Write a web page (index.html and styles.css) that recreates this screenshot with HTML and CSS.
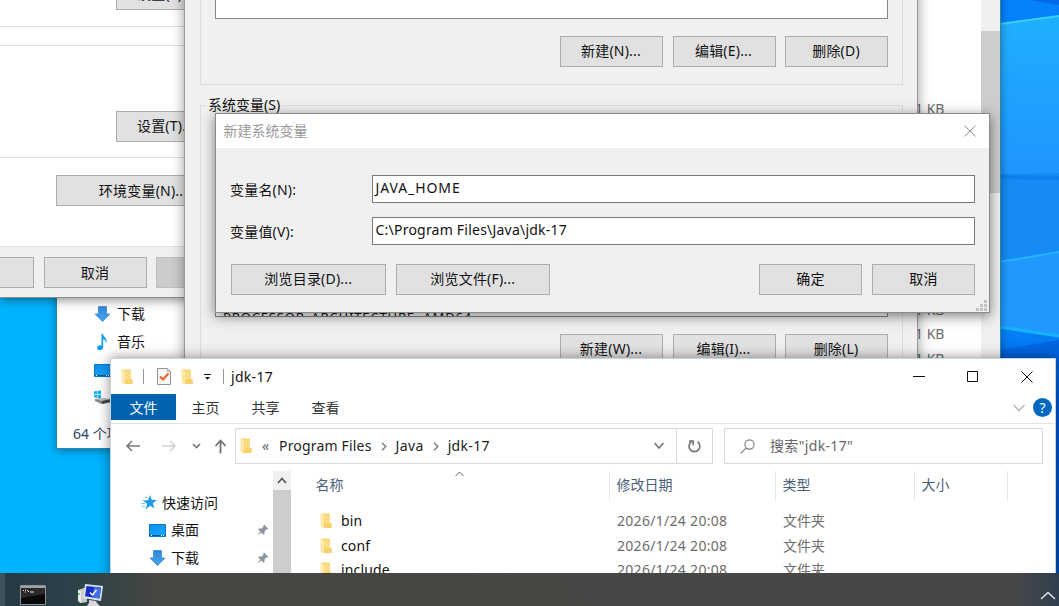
FILE: index.html
```html
<!DOCTYPE html>
<html lang="zh-CN">
<head>
<meta charset="utf-8">
<title>jdk-17</title>
<link rel="stylesheet" href="styles.css">
</head>
<body>
<svg width="0" height="0" class="defs">
  <defs>
    <linearGradient id="arr" x1="0" y1="0" x2="0" y2="1"><stop offset="0" stop-color="#2f86d8"/><stop offset="1" stop-color="#48a6f2"/></linearGradient>
    <linearGradient id="scr" x1="0" y1="0" x2="1" y2="1"><stop offset="0" stop-color="#0f8fee"/><stop offset="1" stop-color="#16aaff"/></linearGradient>
    <symbol id="folder" viewBox="0 0 12 16"><path d="M1 .5h9v9.500h1.500V15H4L1 13z" fill="#f8d675"/><path d="M.5.5L4 2.500V16L.5 13.500z" fill="#ffe9a9"/><path d="M4 2h6v9H4z" fill="#fbdc85"/><path d="M4 10.500h7.500V15H4z" fill="#f6d06a"/></symbol>
    <symbol id="down" viewBox="0 0 16 16"><path d="M4 .5h8V8h3.500L8 15.500.5 8H4z" fill="url(#arr)" stroke="#2c7fcb" stroke-width=".7"/></symbol>
    <symbol id="desk" viewBox="0 0 17 13"><path d="M.5.5h16v12H.5z" fill="url(#scr)" stroke="#0878cb"/><path d="M1 11.500h15" stroke="#075b9d"/><path d="M2 11.500h1M12 11.500h1M14 11.500h1" stroke="#fff"/></symbol>
    <symbol id="pin" viewBox="0 0 12 12"><path d="M7 .5L11.500 5l-1 .6-1-.3-2 2.100.1 2.300-1 1L4.300 8.500.7 11.300.5 11.100 3.400 7.600 1.200 5.400l1-1 2.400.1 2-2-.3-1z" fill="#8b959f"/></symbol>
  </defs>
</svg>
<div class="desktop">
  <svg class="wallpaper" width="1059" height="606">
    <defs>
      <linearGradient id="wl" x1="0" y1="0" x2="1" y2="0"><stop offset="0" stop-color="#00b4ff"/><stop offset="1" stop-color="#00abf8"/></linearGradient>
      <linearGradient id="wr" x1="0" y1="0" x2="0" y2="1"><stop offset="0" stop-color="#20b2ff"/><stop offset=".3" stop-color="#1f94ff"/><stop offset="1" stop-color="#1ba0ff"/></linearGradient>
      <linearGradient id="wd" x1="0" y1="0" x2="0" y2="1"><stop offset="0" stop-color="#0583f7"/><stop offset=".25" stop-color="#005be0"/><stop offset="1" stop-color="#0050b4"/></linearGradient>
    </defs>
    <rect width="999" height="606" fill="url(#wl)"/>
    <rect x="999" width="60" height="606" fill="url(#wr)"/>
    <path d="M999 0h60v16l-60 8z" fill="#0581fa"/>
    <path d="M1030 0h29v5z" fill="#006ae8"/>
    <path d="M999 24l60-8" stroke="#39d0ff" stroke-width="2"/>
    <path d="M999 174l60-1v84l-60 5z" fill="#188af5"/>
    <path d="M999 177l60 1" stroke="#087ae8" stroke-width="4" opacity=".6"/>
    <path d="M999 262l60-10v84l-60-9z" fill="#2098fd"/>
    <path d="M999 262l60-10" stroke="#25b3ff" stroke-width="2"/>
    <path d="M999 327l60 9v270h-60z" fill="url(#wd)"/>
    <path d="M999 327l60 9" stroke="#16b4ff" stroke-width="3"/>
    <path d="M1000 350l59-10v30h-59z" fill="#0064df"/>
  </svg>

  <section class="win back">
    <div class="tree">
      <div class="titem"><svg width="16" height="16"><use href="#down"/></svg>下载</div>
      <div class="titem"><svg width="16" height="18" viewBox="0 0 16 18"><path d="M7 1h1.500c.5 3 5 4 3.200 9.500C11.500 7.500 10 6.500 8.700 6.300V14c0 4-6.200 4.200-6.200.8 0-2 2.500-3.200 4.500-2.300z" fill="#139bf3"/></svg>音乐</div>
      <div class="titem"><svg width="17" height="13"><use href="#desk"/></svg></div>
      <div class="titem"><svg width="17" height="16" viewBox="0 0 17 16"><path d="M0 1.500l3-.4v3H0zM3.600 1L7 .5v3.600H3.600zM0 4.700h3v3l-3-.4zM3.600 4.700H7v3.600l-3.400-.4z" fill="#11b0ef"/><path d="M1 9l6-1.500L17 9v3l-9 2-7-3z" fill="#b9bcbd"/><path d="M1 9l7 2v3l-7-3z" fill="#888"/><path d="M8 11l9-2v3l-9 2z" fill="#444"/></svg></div>
    </div>
    <div class="status">64 个项目</div>
    <div class="sizes"><span>1 KB</span><span class="gap">1 KB</span><span>1 KB</span><span>1 KB</span></div>
    <div class="vbar"><i></i></div>
  </section>

  <section class="win sys">
    <div class="btn b1">设置(S)...</div>
    <hr class="h1"><hr class="h2">
    <div class="btn b2">设置(T)...</div>
    <hr class="h3">
    <div class="btn b3">环境变量(N)...</div>
    <div class="foot"><div class="btn f1"></div><div class="btn f2">取消</div><div class="btn f3">应用(A)</div></div>
  </section>

  <section class="win env">
    <div class="group g1">
      <div class="list l1"></div>
      <div class="row"><div class="btn">新建(N)...</div><div class="btn">编辑(E)...</div><div class="btn">删除(D)</div></div>
    </div>
    <div class="group g2">
      <div class="legend">系统变量(S)</div>
      <div class="list l2"><span>PROCESSOR_ARCHITECTURE&nbsp; AMD64</span></div>
      <div class="row"><div class="btn">新建(W)...</div><div class="btn">编辑(I)...</div><div class="btn">删除(L)</div></div>
    </div>
  </section>

  <section class="win dlg">
    <header><span>新建系统变量</span><svg width="12" height="12" viewBox="0 0 12 12"><path d="M.5.5l11 11M11.500.5l-11 11" stroke="#8e8e8e" fill="none"/></svg></header>
    <div class="field"><label>变量名(N):</label><div class="input"><span class="t1">JAVA_HOME</span></div></div>
    <div class="field"><label>变量值(V):</label><div class="input"><span class="t2">C:\Program Files\Java\jdk-17</span></div></div>
    <div class="acts"><div class="btn wide">浏览目录(D)...</div><div class="btn wide">浏览文件(F)...</div><div class="btn ok">确定</div><div class="btn">取消</div></div>
    <svg class="grip" width="11" height="11" viewBox="0 0 11 11"><path d="M8 0h3v3H8zM4 4h3v3H4zM8 4h3v3H8zM0 8h3v3H0zM4 8h3v3H4zM8 8h3v3H8z" fill="#c3c3c3"/></svg>
  </section>

  <section class="win exp">
    <div class="title">
      <svg width="12" height="16"><use href="#folder"/></svg><i class="bar b-a"></i>
      <svg class="chk" width="14" height="17" viewBox="0 0 14 17"><path d="M.5.5h10l3 3v13H.5z" fill="#f7f7f7" stroke="#929292"/><path d="M10.500.5v3h3" fill="none" stroke="#aaa"/><path d="M3 8.500l3 3 5.500-6" fill="none" stroke="#e8622c" stroke-width="2"/></svg>
      <svg class="fb" width="12" height="16"><use href="#folder"/></svg>
      <svg class="dd" width="7" height="6" viewBox="0 0 7 6"><path d="M0 .5h7" stroke="#111"/><path d="M1 3h5L3.500 5.800z" fill="#111"/></svg>
      <i class="bar b-b"></i><span class="name">jdk-17</span>
      <div class="ctl"><svg width="12" height="12"><path d="M0 5.500h12" stroke="#111"/></svg><svg width="12" height="12"><path d="M.5.5h10v10H.5z" stroke="#111" fill="none"/></svg><svg width="12" height="12"><path d="M.5.500l11 11M11.500.5l-11 11" stroke="#111"/></svg></div>
    </div>
    <div class="tabs"><b>文件</b><span>主页</span><span>共享</span><span>查看</span>
      <svg class="chev" width="12" height="8"><path d="M.5 1l5.500 5.500L11.500 1" stroke="#b1b1b1" stroke-width="1.300" fill="none"/></svg><div class="help">?</div></div>
    <div class="nav">
      <svg class="arrows" width="106" height="20" viewBox="0 0 106 20" fill="none"><path d="M20 10H7M12 5l-5 5 5 5" stroke="#777" stroke-width="1.500"/><path d="M42 10h13M50 5l5 5-5 5" stroke="#d0d0d0" stroke-width="1.500"/><path d="M73 8l3.500 3.500L80 8" stroke="#777" stroke-width="1.700"/><path d="M100.500 17.500V5M95.500 10l5-5.500 5 5.500" stroke="#737373" stroke-width="1.800"/></svg>
      <div class="addr"><svg width="12" height="16"><use href="#folder"/></svg><i class="lq">«</i><span class="pf">Program Files</span><svg width="6" height="9" class="sep s1"><path d="M1 .7l3.800 3.800L1 8.300" stroke="#777" stroke-width="1.300" fill="none"/></svg><span class="jv">Java</span><svg width="6" height="9" class="sep s2"><path d="M1 .7l3.800 3.800L1 8.300" stroke="#777" stroke-width="1.300" fill="none"/></svg><span class="jd">jdk-17</span>
        <svg class="ad" width="12" height="8"><path d="M1.500 1L6 6l4.500-5" stroke="#777" stroke-width="1.700" fill="none"/></svg>
        <div class="re"><svg width="15" height="15" viewBox="0 0 15 15" fill="none"><path d="M10.500 2.800a5.400 5.400 0 1 1-5.800-.2M2 2h4.200v4.200" stroke="#777" stroke-width="1.700"/></svg></div></div>
      <div class="search"><svg width="15" height="15" viewBox="0 0 15 15" fill="none"><circle cx="9.500" cy="5.500" r="4.600" stroke="#7b7b7b" stroke-width="1.100"/><path d="M6.200 8.800L.7 14.300" stroke="#7b7b7b" stroke-width="1.100"/></svg>搜索"jdk-17"</div>
    </div>
    <div class="body">
      <div class="side">
        <div class="q"><svg width="16" height="15" viewBox="0 0 16 15"><path d="M9 0l1.800 4.700 5.100.2-4 3.300 1.600 5.300-4.400-2.700-4.500 3.600 1.400-5.500L2.200 5.500l5-.4z" fill="#219be9"/><path d="M1 5.500h4M0 8.500h4M1 11.500h3M4 2.500h3" stroke="#7ccaf6"/></svg>快速访问</div>
        <div class="q in"><svg width="17" height="13"><use href="#desk"/></svg>桌面<svg class="pin" width="12" height="12"><use href="#pin"/></svg></div>
        <div class="q in"><svg width="16" height="16"><use href="#down"/></svg>下载<svg class="pin" width="12" height="12"><use href="#pin"/></svg></div>
      </div>
      <div class="sb"><svg width="10" height="7"><path d="M1 6l4-4.500L9 6" stroke="#555" stroke-width="1.700" fill="none"/></svg><i></i></div>
      <div class="files">
        <div class="cols"><span>名称<svg class="sort" width="9" height="6"><path d="M.5 5l4-4 4 4" stroke="#666" fill="none"/></svg></span><span>修改日期</span><span>类型</span><span>大小</span></div>
        <div class="f"><svg width="12" height="16"><use href="#folder"/></svg><span>bin</span><span>2026/1/24 20:08</span><span>文件夹</span></div>
        <div class="f"><svg width="12" height="16"><use href="#folder"/></svg><span>conf</span><span>2026/1/24 20:08</span><span>文件夹</span></div>
        <div class="f"><svg width="12" height="16"><use href="#folder"/></svg><span>include</span><span>2026/1/24 20:08</span><span>文件夹</span></div>
      </div>
    </div>
  </section>

  <footer class="task">
    <svg class="cmd" width="26" height="20" viewBox="0 0 26 20"><path d="M.5.5h25v19H.5z" fill="#080808" stroke="#8c9294"/><path d="M1 2h24" stroke="#9fa3a5" stroke-width="2"/><path d="M3 5.500h1M5 5h1M5 7h1M7 5l2 2M10 7h4" stroke="#ddd"/><path d="M1 3h24v6L1 13z" fill="#fff" opacity=".14"/></svg>
    <svg class="pc" width="27" height="22" viewBox="0 0 27 22"><path d="M1 6l6-2 3 1v13l-6 1-3-2z" fill="#c9cdca"/><path d="M1 6l3 1v12l-3-2z" fill="#ecefed"/><path d="M2 9v2" stroke="#43c434" stroke-width="1.500"/><path d="M8 0l18 2-2 15L6 14z" fill="#dbe2e8"/><path d="M9.500 2L24 3.500 22.500 14.500 8 12.300z" fill="#1730c4"/><path d="M17 3l7 .7-1.500 10.800-7-1z" fill="#426de4"/><path d="M13 8.500l2.500 2.500 4-5" fill="none" stroke="#fff" stroke-width="1.500"/><path d="M12 16l7 1 1 2 3 3H10l2-3z" fill="#d4d8db"/></svg>
    <svg class="tray" width="16" height="9"><path d="M1 8l7-6.500L15 8" stroke="#e8e8e8" stroke-width="1.400" fill="none"/></svg>
  </footer>
</div>
</body>
</html>
```
FILE: styles.css
```css
* { box-sizing: border-box; }
body { margin: 0; font: 14px/20px "Noto Sans", "Noto Sans CJK SC", sans-serif; color: #111; }
svg { display: block; flex: none; }
i { font-style: normal; }
.defs { position: absolute; }
.desktop { position: relative; width: 1059px; height: 606px; overflow: hidden; background: #00b0fc; white-space: nowrap; }
.wallpaper { position: absolute; left: 0; top: 0; }
.win { position: absolute; }
.btn { width: 103px; height: 31px; flex: none; display: flex; align-items: center; justify-content: center; background: #e1e1e1; border: 1px solid #adadad; letter-spacing: .2px; padding-bottom: 2px; }

/* background explorer */
.back { left: 56px; top: -20px; width: 945px; height: 469px; background: #fff; border: 1px solid #2c86a8; border-top: 0; box-shadow: 0 2px 8px rgba(0,0,0,.35); display: grid; grid-template: 1fr 30px / 1fr 64px 19px; }
.tree { padding: 320px 0 0 37px; }
.titem { display: flex; align-items: center; gap: 6px; height: 28px; }
.titem svg { width: 17px; }
.status { grid-row: 2; grid-column: 1; padding: 6px 0 0 16px; color: #2c4668; }
.sizes { grid-column: 2; grid-row: 1 / 3; display: flex; flex-direction: column; gap: 4.500px; padding-top: 119px; color: #6d6d6d; margin-left: -2px; }
.sizes .gap { margin-top: 176px; }
.vbar { grid-column: 3; grid-row: 1 / 3; background: #f0f0f0; padding-top: 51px; }
.vbar i { display: block; height: 162px; background: #cdcdcd; }

/* system properties */
.sys { left: 0; top: -21px; width: 220px; height: 319px; background: #fff; box-shadow: 0 2px 10px rgba(0,0,0,.45); border-bottom: 1px solid #8b8b8b; }
.sys hr { border: 0; height: 1px; background: #dcdcdc; margin: 0; }
.b1, .b2 { margin-left: 116px; }
.b1, .b2 { padding: 0 4px 1px 0; }
.sys .h1 { margin-top: 16px; }
.sys .h2 { margin-top: 18px; }
.b2 { margin-top: 65px; height: 31px; }
.sys .h3 { margin-top: 15px; }
.b3 { margin: 17px 0 0 56px; width: 172px; padding: 0 0 0 2px; }
.foot { margin-top: 40px; height: 51px; border-top: 1px solid #dfdfdf; background: #f0f0f0; display: flex; gap: 9.500px; padding-top: 10px; }
.f1 { width: 34px; border-left: 0; }
.f2 { padding-bottom: 0; }
.f3 { background: #ccc; border-color: #bfbfbf; color: #838383; }

/* environment variables */
.env { left: 184px; top: -41px; width: 734px; height: 440px; background: #f0f0f0; border: 1px solid #999; box-shadow: 0 2px 12px rgba(0,0,0,.4); padding: 0 14px 0 15px; }
.group { border: 1px solid #dcdcdc; padding: 0 14px; }
.g1 { height: 125px; border-top: 0; }
.list { background: #fff; border: 1px solid #828790; }
.l1 { height: 59px; }
.row { display: flex; justify-content: flex-end; gap: 9.500px; }
.row .btn { padding-right: 1px; }
.g1 .row { margin-top: 17px; }
.g2 { margin-top: 20px; height: 300px; }
.legend { margin: -11px 0 0 -9px; background: #f0f0f0; display: table; padding: 0 2px; line-height: 20px; }
.l2 { margin-top: 100px; height: 102px; display: flex; align-items: flex-end; overflow: hidden; padding-left: 7px; }
.l2 span { margin-bottom: -11px; line-height: 20px; font-size: 13px; letter-spacing: .85px; }
.g2 .row { margin-top: 17px; }

/* new variable dialog */
.dlg { left: 215px; top: 113px; width: 775px; height: 200px; background: #f0f0f0; border: 1px solid #8b8b8b; box-shadow: 0 3px 12px rgba(0,0,0,.5); }
.dlg header { height: 34px; background: #fff; display: flex; align-items: center; justify-content: space-between; padding: 0 13px 0 7.500px; color: #999; }
.dlg header span { margin-top: -1px; }
.field { display: flex; height: 28px; padding: 0 14px; margin-top: 14px; }
.dlg header + .field { margin-top: 27px; }
.field label { width: 142px; line-height: 29px; letter-spacing: .2px; }
.input { flex: 1; height: 28px; border: 1px solid #7a7a7a; background: #fff; padding-left: 2.500px; line-height: 24px; }
.t1 { letter-spacing: .9px; }
.t2 { letter-spacing: .22px; }
.acts { display: flex; gap: 10px; padding: 19px 14px 0 15px; }
.acts .btn { padding-bottom: 1px; }
.acts .wide { width: 154.500px; }
.ok { margin-left: auto; }
.grip { position: absolute; right: 2px; bottom: 1px; }

/* foreground explorer */
.exp { left: 110px; top: 358px; width: 946px; height: 230px; background: #fff; box-shadow: 0 0 12px rgba(0,0,0,.45); border: 1px solid #c6d4dc; border-bottom: 0; }
.title { height: 35px; display: flex; align-items: center; padding-left: 10px; }
.bar { width: 1px; height: 15px; background: #999; }
.b-a { margin-left: 10px; }
.chk { margin-left: 13px; }
.fb { margin-left: 10px; }
.dd { margin-left: 11px; }
.b-b { margin-left: 12px; }
.name { margin-left: 7px; letter-spacing: .3px; }
.ctl { margin-left: auto; display: flex; gap: 42px; padding-right: 22px; }
.tabs { height: 30px; display: flex; align-items: flex-start; line-height: 28px; border-bottom: 1px solid #e2e2e2; color: #333; }
.tabs b { width: 65px; height: 26px; background: #0063b1; color: #fff; font-weight: 400; text-align: center; line-height: 27px; }
.tabs span { width: 28px; margin-left: 32px; }
.tabs b + span { margin-left: 15.500px; }
.tabs .chev { margin: 10px 8px 0 auto; }
.help { width: 19px; height: 19px; border-radius: 50%; background: #0068c0; color: #fff; line-height: 19px; text-align: center; margin: 4px 3px 0 0; }
.nav { height: 47px; display: flex; padding: 4px 12px 0 14px; }
.arrows { margin-top: 8px; margin-left: -5px; }
.addr { margin-left: 9px; width: 478px; height: 36px; border: 1px solid #d9d9d9; display: flex; align-items: center; padding-left: 5px; color: #222; }
.addr > svg:first-child { margin-left: -1px; }
.lq { color: #666; margin-left: 10px; width: 9px; }
.pf { margin-left: 8px; letter-spacing: .18px; }
.s1 { margin: 0 9px 0 9px; }
.s2 { margin: 0 9px 0 9px; }
.jv, .jd { letter-spacing: .35px; }
.ad { margin-left: auto; margin-right: 11px; }
.re { width: 36px; height: 34px; border-left: 1px solid #d9d9d9; display: flex; align-items: center; justify-content: center; }
.search { margin-left: 11px; flex: 1; height: 36px; border: 1px solid #d9d9d9; display: flex; align-items: center; gap: 15px; padding-left: 15px; color: #666; letter-spacing: .35px; }
.body { display: flex; height: 103px; overflow: hidden; }
.side { width: 162px; padding-top: 18px; }
.q { height: 27.500px; display: flex; align-items: center; gap: 5px; padding: 0 4px 0 30px; }
.q.in { padding-left: 38px; }
.q.in svg:first-child { width: 17px; }
.pin { margin-left: auto; }
.sb { width: 18px; background: #f0f0f0; padding-top: 6px; }
.sb svg { margin: 0 auto; }
.sb i { display: block; margin-top: 6px; height: 90px; background: #cdcdcd; }
.files { flex: 1; }
.cols { display: flex; color: #4c607a; line-height: 28px; height: 37.500px; }
.cols span { height: 29px; border-right: 1px solid #e5e5e5; width: 139px; padding-left: 6.500px; }
.cols span:first-child { width: 319px; padding-left: 24.500px; display: flex; }
.cols span:nth-child(2) { width: 166px; }
.cols span:nth-child(4) { width: 93px; }
.sort { margin: 0 0 0 111.500px; }
.f { display: flex; height: 24.800px; align-items: center; padding-left: 29px; color: #6d6d6d; }
.f span:nth-child(2) { width: 276px; margin-left: 9px; color: #111; letter-spacing: .15px; }
.f span:nth-child(3) { width: 166px; letter-spacing: .3px; }

.task { position: absolute; left: 0; top: 573px; width: 1059px; height: 33px; display: flex; align-items: flex-start; padding: 12px 4px 0 15px; background: linear-gradient(90deg, #253a44 0, #2d4249 80px, #464642 150px, #474747 1010px, #2c3d50 1059px); border-left: 5px solid #41515a; }
.pc { margin: -1px 0 0 31px; }
.tray { margin: 6px -1px 0 auto; }
```
